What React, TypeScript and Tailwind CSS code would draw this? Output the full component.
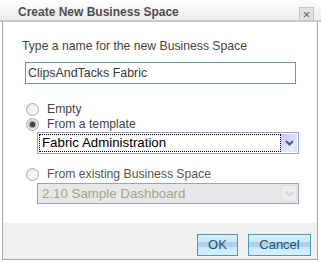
function Radio({ checked }: { checked?: boolean }) {
  return (
    <span className="relative inline-block w-[13px] h-[13px] rounded-full border border-[#a8a8a8] bg-gradient-to-br from-[#e8e8e8] to-white shrink-0">
      {checked && (
        <span className="absolute left-[3px] top-[3px] w-[5px] h-[5px] rounded-full bg-[#404040] shadow-[0_0_2px_1px_#7a7a7a]" />
      )}
    </span>
  );
}

function Chevron({ color }: { color: string }) {
  return (
    <svg width="9" height="6" viewBox="0 0 9 6">
      <path d="M1 1 L4.5 4.5 L8 1" fill="none" stroke={color} strokeWidth="2" />
    </svg>
  );
}

function BlueButton({ label, width }: { label: string; width: string }) {
  return (
    <button
      className={`${width} h-[22px] border border-[#4a9ab8] text-[13px] text-[#1d5566] bg-[linear-gradient(#d6effc_0%,#cde9fa_35%,#a9d1f1_36%,#a9d1f1_60%,#cbe8fa_61%,#d6effc_100%)]`}
    >
      {label}
    </button>
  );
}

export default function App() {
  return (
    <div className="w-[321px] h-[263px] bg-white font-['Liberation_Sans',Arial,sans-serif] overflow-hidden">
      <div className="h-[22px] flex items-center justify-between pl-[18px] pr-[7px] bg-[linear-gradient(#ffffff,#ececec)] border-b-2 border-[#c8c8c8]">
        <span className="text-[12px] font-bold text-[#4d4d4d] pt-[4px]">Create New Business Space</span>
        <span className="mt-[8px] w-[15px] h-[14px] flex items-center justify-center bg-[#e2e2e2] border border-[#c4c4c4] text-[#555] text-[13px] leading-none">
          ×
        </span>
      </div>

      <div className="ml-[2px] w-[316px] h-[238px] border-l border-r border-b border-[#a8a8a8] flex flex-col">
        <div className="flex-1 pl-[19px] pt-[16px]">
          <div className="text-[12.2px] leading-[16px] text-[#444]">Type a name for the new Business Space</div>
          <div className="mt-[8px] ml-[3px] w-[271px] h-[22px] border border-[#5f9ea8] flex items-center pl-[2px] text-[12.4px] text-[#3a3a3a]">
            ClipsAndTacks Fabric
          </div>

          <div className="mt-[19px] ml-[4px] flex flex-col gap-[2px]">
            <label className="flex items-center gap-[8px] text-[12.2px] leading-[13px] text-[#444]">
              <Radio />
              Empty
            </label>
            <label className="flex items-center gap-[8px] text-[12.2px] leading-[13px] text-[#444]">
              <Radio checked />
              From a template
            </label>
          </div>

          <div className="mt-[1px] ml-[15px] w-[262px] h-[22px] border border-[#9e9ed2] flex items-center p-[1px]">
            <div className="flex-1 h-full border border-dotted border-black flex items-center pl-[2px] text-[13.3px] text-black">
              Fabric Administration
            </div>
            <div className="w-[16px] h-full flex items-center justify-center bg-[linear-gradient(135deg,#c6c6f8,#dceeff_70%,#c9e2f6)]">
              <Chevron color="#55557f" />
            </div>
          </div>

          <label className="mt-[14px] ml-[4px] flex items-center gap-[8px] text-[12.2px] leading-[13px] text-[#555]">
            <Radio />
            From existing Business Space
          </label>

          <div className="mt-[2px] ml-[15px] w-[262px] h-[21px] border border-[#9e9ed2] bg-[#e8e8e8] flex items-center p-[1px]">
            <div className="flex-1 pl-[3px] text-[13.3px] text-[#a4a48a]">2.10 Sample Dashboard</div>
            <div className="w-[16px] h-full flex items-center justify-center bg-[#ededed] border border-[#dedede]">
              <Chevron color="#d4d4d4" />
            </div>
          </div>
        </div>

        <div className="h-[36px] bg-[#f0f0f0] flex items-start justify-end gap-[10px] pt-[11px] pr-[6px]">
          <BlueButton label="OK" width="w-[41px]" />
          <BlueButton label="Cancel" width="w-[63px]" />
        </div>
      </div>
    </div>
  );
}
